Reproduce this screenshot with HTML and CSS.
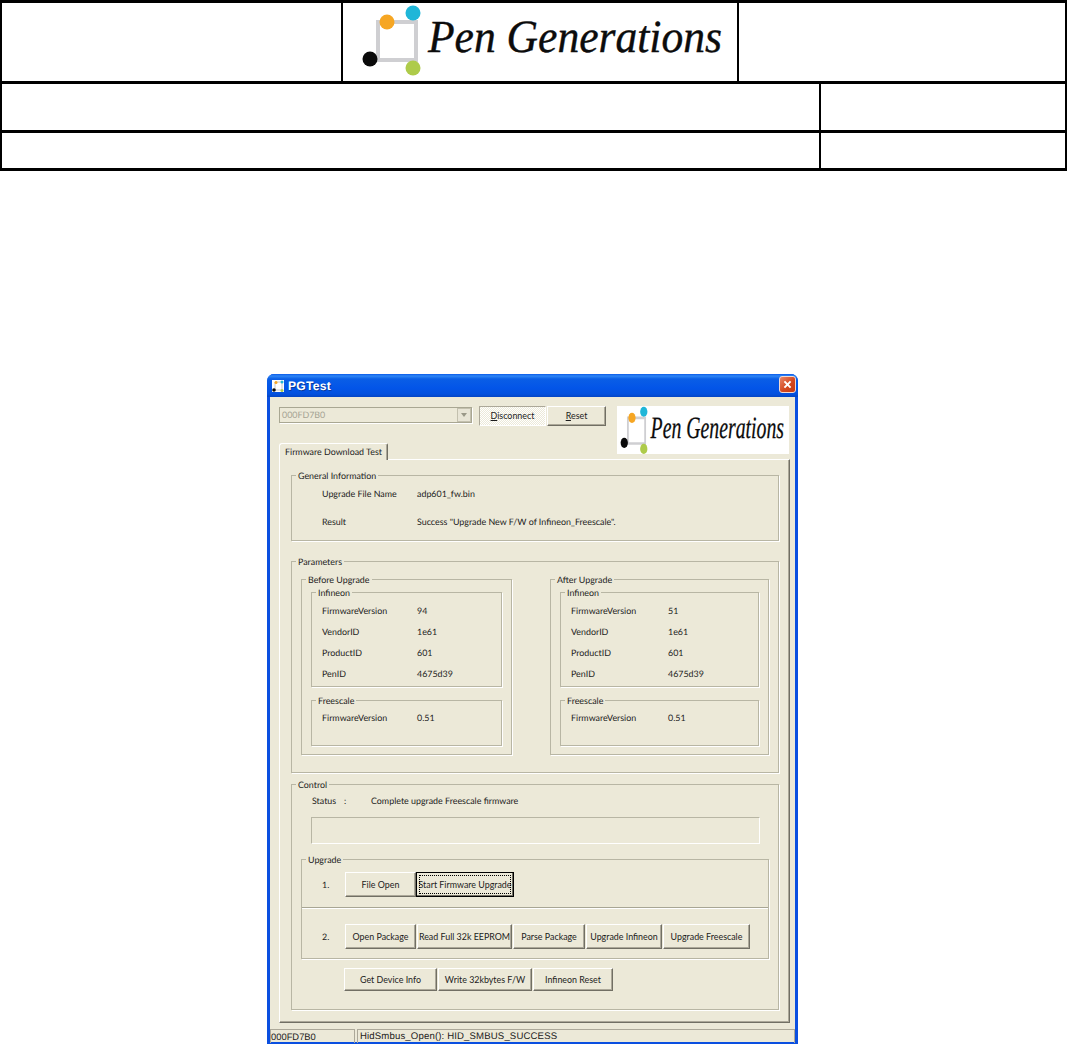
FILE: index.html
```html
<!DOCTYPE html>
<html lang="en">
<head>
<meta charset="utf-8">
<title>PGTest</title>
<link rel="stylesheet" href="styles.css">
</head>
<body>
<header class="doc-head">
  <div class="doc-row doc-row-logo">
    <div class="doc-cell doc-side"></div>
    <div class="doc-cell doc-logo">
      <svg class="logo-big" viewBox="343 3 394 78" preserveAspectRatio="none">
        <path class="logo-frame" d="M378 60V22H416V60Z"/>
        <circle class="dot-orange" cx="387" cy="22" r="7.5"/>
        <circle class="dot-cyan" cx="413" cy="13" r="7.5"/>
        <circle class="dot-black" cx="370" cy="59" r="7.5"/>
        <circle class="dot-green" cx="413" cy="68" r="7.5"/>
        <text class="logo-text" x="428" y="52" textLength="294" lengthAdjust="spacingAndGlyphs">Pen Generations</text>
      </svg>
    </div>
    <div class="doc-cell doc-fill"></div>
  </div>
  <div class="doc-row doc-row-mid">
    <div class="doc-cell doc-wide"></div>
    <div class="doc-cell doc-fill"></div>
  </div>
  <div class="doc-row doc-row-low">
    <div class="doc-cell doc-wide"></div>
    <div class="doc-cell doc-fill"></div>
  </div>
</header>

<main class="window">
  <div class="titlebar">
    <svg class="app-icon" viewBox="0 0 12 12">
      <rect class="app-bg" width="12" height="12"/>
      <path class="app-frame" d="M3 2H10V10H3Z"/>
      <circle class="dot-orange" cx="4" cy="2.5" r="1.5"/>
      <circle class="dot-cyan" cx="10" cy="2" r="1.5"/>
      <circle class="dot-black" cx="2" cy="10" r="1.8"/>
      <circle class="dot-green" cx="10" cy="10.5" r="1.5"/>
    </svg>
    <span class="title-text">PGTest</span>
    <span class="close-btn">
      <svg viewBox="0 0 17 17"><path class="close-x" d="M5 5L12 12M12 5L5 12"/></svg>
    </span>
  </div>

  <div class="client">
    <div class="top-area">
      <div class="top-left">
        <div class="controls">
          <div class="combo">
            <span class="combo-value">000FD7B0</span>
            <span class="combo-arrow"></span>
          </div>
          <button class="btn btn-pressed btn-disconnect"><span class="ul">D</span>isconnect</button>
          <button class="btn btn-reset"><span class="ul">R</span>eset</button>
        </div>
        <div class="tab">Firmware Download Test</div>
      </div>
      <svg class="logo-small" viewBox="354 4.5 379 71" preserveAspectRatio="none">
        <rect class="logo-bg" x="354" y="4.5" width="379" height="71"/>
        <path class="logo-frame" d="M378 60V22H416V60Z"/>
        <ellipse class="dot-orange" cx="387" cy="22" rx="8" ry="7.5"/>
        <ellipse class="dot-cyan" cx="413" cy="13" rx="8" ry="7.5"/>
        <ellipse class="dot-black" cx="370" cy="59" rx="8" ry="7.5"/>
        <ellipse class="dot-green" cx="413" cy="68" rx="8" ry="7.5"/>
        <text class="logo-text" x="428" y="52" textLength="294" lengthAdjust="spacingAndGlyphs">Pen Generations</text>
      </svg>
    </div>

    <div class="panel">
      <fieldset class="group g-general">
        <legend>General Information</legend>
        <div class="general-body">
          <div class="row row-general"><span class="lbl lbl-general">Upgrade File Name</span><span>adp601_fw.bin</span></div>
          <div class="row row-general"><span class="lbl lbl-general">Result</span><span>Success "Upgrade New F/W of Infineon_Freescale".</span></div>
        </div>
      </fieldset>

      <fieldset class="group g-params">
        <legend>Parameters</legend>
        <div class="params-body">
          <fieldset class="group g-side g-before">
            <legend>Before Upgrade</legend>
            <div class="side-body">
              <fieldset class="group g-chip g-infineon">
                <legend>Infineon</legend>
                <div class="chip-body">
                  <div class="row row-param"><span class="lbl lbl-before">FirmwareVersion</span><span>94</span></div>
                  <div class="row row-param"><span class="lbl lbl-before">VendorID</span><span>1e61</span></div>
                  <div class="row row-param"><span class="lbl lbl-before">ProductID</span><span>601</span></div>
                  <div class="row row-param-last"><span class="lbl lbl-before">PenID</span><span>4675d39</span></div>
                </div>
              </fieldset>
              <fieldset class="group g-chip g-freescale">
                <legend>Freescale</legend>
                <div class="chip-body chip-body-low">
                  <div class="row row-param"><span class="lbl lbl-before">FirmwareVersion</span><span>0.51</span></div>
                </div>
              </fieldset>
            </div>
          </fieldset>
          <fieldset class="group g-side g-after">
            <legend>After Upgrade</legend>
            <div class="side-body">
              <fieldset class="group g-chip g-infineon">
                <legend>Infineon</legend>
                <div class="chip-body">
                  <div class="row row-param"><span class="lbl lbl-after">FirmwareVersion</span><span>51</span></div>
                  <div class="row row-param"><span class="lbl lbl-after">VendorID</span><span>1e61</span></div>
                  <div class="row row-param"><span class="lbl lbl-after">ProductID</span><span>601</span></div>
                  <div class="row row-param-last"><span class="lbl lbl-after">PenID</span><span>4675d39</span></div>
                </div>
              </fieldset>
              <fieldset class="group g-chip g-freescale">
                <legend>Freescale</legend>
                <div class="chip-body chip-body-low">
                  <div class="row row-param"><span class="lbl lbl-after">FirmwareVersion</span><span>0.51</span></div>
                </div>
              </fieldset>
            </div>
          </fieldset>
        </div>
      </fieldset>

      <fieldset class="group g-control">
        <legend>Control</legend>
        <div class="control-body">
          <div class="status-line"><span class="status-lbl">Status</span><span class="status-colon">:</span><span>Complete upgrade Freescale firmware</span></div>
          <div class="progress"></div>
          <fieldset class="group g-upgrade">
            <legend>Upgrade</legend>
            <div class="step step-one">
              <span class="step-num">1.</span>
              <div class="btn-row btn-row-one">
                <button class="btn">File Open</button>
                <button class="btn btn-default">Start Firmware Upgrade</button>
              </div>
            </div>
            <div class="step step-two">
              <span class="step-num">2.</span>
              <div class="btn-row btn-row-two">
                <button class="btn">Open Package</button>
                <button class="btn">Read Full 32k EEPROM</button>
                <button class="btn">Parse Package</button>
                <button class="btn">Upgrade Infineon</button>
                <button class="btn">Upgrade Freescale</button>
              </div>
            </div>
          </fieldset>
          <div class="btn-row btn-row-three">
            <button class="btn">Get Device Info</button>
            <button class="btn">Write 32kbytes F/W</button>
            <button class="btn">Infineon Reset</button>
          </div>
        </div>
      </fieldset>
    </div>

    <footer class="statusbar">
      <span class="sb-cell sb-id">000FD7B0</span>
      <span class="sb-cell sb-msg">HidSmbus_Open(): HID_SMBUS_SUCCESS</span>
    </footer>
  </div>
</main>
</body>
</html>
```
FILE: styles.css
```css
* { box-sizing: border-box; }

html, body {
  margin: 0;
  padding: 0;
  height: 1044px;
  overflow: hidden;
  background: #fff;
}

body {
  font-family: Lato, "Liberation Sans", Arial, sans-serif;
  font-size: 8.9px;
  line-height: 14px;
  color: #1c1c1c;
  text-rendering: geometricPrecision;
}

/* Document header table */
.doc-head {
  height: 171px;
  border: solid #000;
  border-width: 3px 2px;
  display: flex;
  flex-direction: column;
}
.doc-row { display: flex; }
.doc-row-logo { height: 81px; border-bottom: 3px solid #000; }
.doc-row-mid { height: 49px; border-bottom: 3px solid #000; }
.doc-row-low { flex: 1; }
.doc-cell { height: 100%; }
.doc-side { width: 339px; }
.doc-logo { width: 398px; border: solid #000; border-width: 0 2px; }
.doc-wide { width: 819px; border-right: 2px solid #000; }
.doc-fill { flex: 1; }

.logo-big { display: block; width: 394px; height: 78px; }
.logo-small { display: block; width: 172px; height: 48px; }
.logo-bg { fill: #fff; }
.logo-frame { fill: none; stroke: #cfcfd2; stroke-width: 4; }
.logo-text {
  font-family: "Liberation Serif", serif;
  font-style: italic;
  font-size: 46px;
  fill: #0c0c0c;
  stroke: #0c0c0c;
  stroke-width: .4;
}
.dot-orange { fill: #f6a623; }
.dot-cyan { fill: #1fb6d8; }
.dot-black { fill: #0a0a0a; }
.dot-green { fill: #aecb4a; }

/* Window */
.window {
  width: 531px;
  height: 670px;
  margin: 203px 0 0 267px;
  background: #0a50e0;
  border: solid #0a4fe0;
  border-width: 0 3px 2px;
  border-radius: 7px 7px 0 0;
  display: flex;
  flex-direction: column;
}
.titlebar {
  height: 23px;
  margin: 0 -3px;
  padding: 0 2px 0 5px;
  border-radius: 7px 7px 0 0;
  background: linear-gradient(#0a5be8 0, #2f86f5 2px, #0a5ee6 5px, #0355e8 14px, #0351de 20px, #0445c4 23px);
  display: flex;
  align-items: center;
  flex: none;
}
.app-icon { width: 12px; height: 12px; flex: none; }
.app-bg { fill: #fff; }
.app-frame { fill: none; stroke: #c8c8c8; stroke-width: 1; }
.title-text {
  margin-left: 4px;
  font-family: "Liberation Sans", Arial, sans-serif;
  font-size: 12.2px;
  font-weight: bold;
  color: #fff;
  letter-spacing: .2px;
  text-shadow: 1px 1px 0 #0a3a9c;
}
.close-btn {
  margin-left: auto;
  margin-top: -2px;
  width: 17px;
  height: 17px;
  border: 1px solid #f3d9cf;
  border-radius: 3px;
  background: linear-gradient(135deg, #e8876a, #d4481f 55%, #c63a12);
  display: block;
}
.close-btn svg { display: block; width: 15px; height: 15px; }
.close-x { stroke: #fff; stroke-width: 2.2; fill: none; }

.client {
  flex: 1;
  min-height: 0;
  padding: 9px 0 0 9px;
  background: #ece9d8;
  display: flex;
  flex-direction: column;
}

/* Top controls */
.top-area {
  display: flex;
  justify-content: space-between;
  height: 53px;
  padding-right: 6px;
  flex: none;
}
.top-left {
  display: flex;
  flex-direction: column;
  justify-content: space-between;
}
.controls { display: flex; align-items: flex-start; }
.combo {
  width: 193px;
  height: 16px;
  margin-top: 1px;
  border: 1px solid #a9a793;
  box-shadow: 1px 1px 0 #fff;
  display: flex;
  align-items: center;
  justify-content: space-between;
  padding: 0 0 0 2px;
  color: #a5a393;
}
.combo-arrow {
  width: 14px;
  height: 14px;
  background: #e8e5d6;
  border: 1px solid #c3c0ae;
  position: relative;
}
.combo-arrow::after {
  content: "";
  position: absolute;
  left: 3px;
  top: 4px;
  border: 3.5px solid transparent;
  border-top: 4px solid #9a9888;
  border-bottom: 0;
}

.btn {
  font: inherit;
  color: inherit;
  margin: 0;
  padding: 0;
  background: #ece9d8;
  border: 1px solid;
  border-color: #fff #716f64 #716f64 #fff;
  box-shadow: inset -1px -1px 0 #aca899;
  white-space: nowrap;
  overflow: hidden;
  display: block;
}
.ul { text-decoration: underline; }
.btn-disconnect {
  width: 67px;
  height: 20px;
  margin-left: 7px;
}
.btn-reset {
  width: 59px;
  height: 20px;
  margin-left: 1px;
}
.btn-pressed {
  border-color: #aca899 #fff #fff #aca899;
  box-shadow: none;
  background: repeating-conic-gradient(#fff 0 25%, #ece9d8 0 50%) 0 0 / 2px 2px;
}
.btn-default {
  border: 1px solid #000;
  box-shadow: inset -1px -1px 0 #716f64;
  outline: 1px dotted #000;
  outline-offset: -4px;
}

.tab {
  width: 109px;
  height: 17px;
  padding: 1px 0 0 5px;
  margin-bottom: -1px;
  background: #ece9d8;
  border: solid;
  border-color: #fff #716f64 #ece9d8 #fff;
  border-width: 1px 1px 0 1px;
  border-radius: 3px 2px 0 0;
  position: relative;
  z-index: 1;
  box-shadow: inset -1px 0 0 #aca899;
  white-space: nowrap;
}

/* Tab panel */
.panel {
  width: 511px;
  height: 564px;
  padding: 10px 0 0 11px;
  border: 1px solid;
  border-color: #fff #716f64 #716f64 #fff;
  box-shadow: inset -1px -1px 0 #aca899;
  flex: none;
}

/* Group boxes */
.group {
  margin: 0;
  padding: 0;
  min-width: 0;
  border: 1px solid #b8b6a4;
  box-shadow: 1px 1px 0 #fff;
  display: block;
}
.group legend {
  margin-left: 4px;
  padding: 0 2px;
  line-height: 11px;
}
.row { display: flex; height: 14px; }
.g-general { width: 488px; height: 71px; }
.general-body { padding: 6px 0 0 30px; }
.row-general { height: 28px; }
.lbl-general { width: 95px; }

.g-params { width: 488px; height: 217px; margin-top: 15px; }
.params-body { display: flex; gap: 38px; padding: 7px 0 0 9px; }
.g-side { height: 181px; flex: none; }
.g-before { width: 211px; }
.g-after { width: 219px; }
.side-body { padding: 2px 0 0 9px; }
.g-before .g-chip { width: 191px; }
.g-after .g-chip { width: 199px; }
.g-infineon { height: 100px; }
.g-freescale { height: 51px; margin-top: 8px; }
.chip-body { padding: 6px 0 0 10px; }
.chip-body-low { padding-top: 5px; }
.row-param { display: flex; height: 21px; }
.row-param-last { display: flex; height: 19px; }
.lbl-before { width: 95px; }
.lbl-after { width: 97px; }

.g-control { width: 488px; height: 231px; margin-top: 6px; }
.control-body { padding: 4px 0 0 9px; }
.status-line { display: flex; padding-left: 11px; height: 14px; }
.status-lbl { width: 32px; }
.status-colon { width: 27px; }
.progress {
  width: 449px;
  height: 27px;
  margin: 9px 0 10px 10px;
  border: 1px solid;
  border-color: #b8b6a4 #fff #fff #b8b6a4;
}
.g-upgrade { width: 468px; height: 105px; }
.step { display: flex; padding-left: 20px; align-items: flex-start; }
.step-one { height: 43px; padding-top: 7px; border-bottom: 1px solid #a8a694; box-shadow: 0 1px 0 #fff; }
.step-two { padding-top: 16px; }
.step-num { width: 23px; line-height: 25px; }
.btn-row { display: grid; }
.btn-row-one { grid-template-columns: 71px 98px; grid-auto-rows: 25px; }
.btn-row-two { grid-template-columns: 71px 95px 72px 76px 87px; grid-auto-rows: 25px; column-gap: 1px; }
.btn-row-three { grid-template-columns: 93px 94px 80px; grid-auto-rows: 23px; column-gap: 1px; margin: 9px 0 0 43px; width: max-content; }

/* Status bar */
.statusbar {
  margin: 6px 0 0 -9px;
  height: 14px;
  display: flex;
  flex: none;
  gap: 2px;
  line-height: 13px;
}
.sb-cell {
  display: block;
  border: solid #aca899;
  border-width: 1px 1px 0 1px;
}
.sb-id { width: 85px; font-family: "Liberation Sans", Arial, sans-serif; font-size: 9.4px; }
.sb-msg { flex: 1; padding-left: 2px; font-family: "Liberation Sans", Arial, sans-serif; font-size: 9.6px; letter-spacing: .14px; }
```
